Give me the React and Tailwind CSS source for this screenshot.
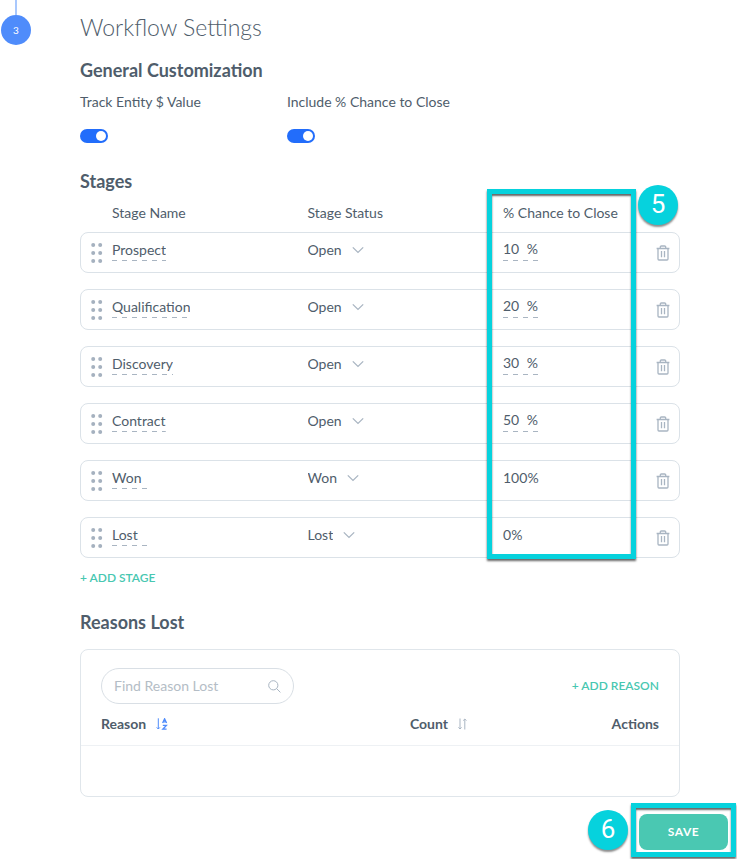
import { useState } from 'react'

const STAGES = [
  { id: 1, name: 'Prospect', status: 'Open', chance: 10 },
  { id: 2, name: 'Qualification', status: 'Open', chance: 20 },
  { id: 3, name: 'Discovery', status: 'Open', chance: 30 },
  { id: 4, name: 'Contract', status: 'Open', chance: 50 },
  { id: 5, name: 'Won', status: 'Won', chance: 100, locked: true },
  { id: 6, name: 'Lost', status: 'Lost', chance: 0, locked: true },
]

const STATUSES = ['Open', 'Won', 'Lost']

const DASHES = 'bg-[repeating-linear-gradient(to_right,#a9b5c2_0_5px,transparent_5px_10px)] bg-[length:100%_1px] bg-bottom bg-no-repeat'
const STAGE_GRID = 'grid grid-cols-[21px_1fr_1fr_153px_14px] pl-[10px] pr-[9px] border'

function Toggle({ id, label }) {
  const [on, setOn] = useState(true)
  return (
    <div className="flex flex-col items-start gap-[17px]">
      <label htmlFor={id} className="leading-5">{label}</label>
      <input id={id} type="checkbox" role="switch" checked={on} onChange={e => setOn(e.target.checked)}
        className="flex h-[14px] w-7 appearance-none items-center rounded-full bg-gray-300 px-[2px] before:size-[10px] before:rounded-full before:bg-white checked:justify-end checked:bg-[#226dfb]" />
    </div>
  )
}

function GripIcon() {
  return (
    <svg width="12" height="20" viewBox="0 0 12 20" fill="#a5b1bf">
      {[2, 10, 18].map(y => (
        <g key={y}>
          <circle cx="2.2" cy={y} r="2" />
          <circle cx="9.2" cy={y} r="2" />
        </g>
      ))}
    </svg>
  )
}

function TrashIcon() {
  return (
    <svg width="14" height="16" viewBox="0 0 14 16" fill="none" stroke="#a9b5c2" strokeWidth="1.3">
      <path d="M0.6 3.5H13.4M2 3.5V14a1 1 0 0 0 1 1H11a1 1 0 0 0 1-1V3.5M4.3 3.3V2.1a1.1 1.1 0 0 1 1.1-1.1H8.6A1.1 1.1 0 0 1 9.7 2.1V3.3M5.5 6V12.3M8.5 6V12.3" />
    </svg>
  )
}

function ChevronIcon() {
  return (
    <svg width="12" height="8" viewBox="0 0 12 8" fill="none" stroke="#a9b5c2" strokeWidth="1.3" className="pointer-events-none">
      <path d="M0.8 1.4L6 6.4L11.2 1.4" />
    </svg>
  )
}

function StageRow({ stage, onChange, onRemove }) {
  return (
    <li className={`${STAGE_GRID} h-[41px] items-center rounded-lg border-[#dbe2e8] bg-white`}>
      <button aria-label={`Move ${stage.name}`} className="cursor-grab"><GripIcon /></button>
      <div className="flex pb-[5px]">
        <input aria-label="Stage name" value={stage.name} onChange={e => onChange({ name: e.target.value })}
          className={`field-sizing-content h-[22px] min-w-[35px] pb-[2px] outline-none ${DASHES}`} />
      </div>
      <div className="flex items-center gap-[10px] pb-[5px]">
        <select aria-label={`${stage.name} status`} value={stage.status} onChange={e => onChange({ status: e.target.value })}
          className="field-sizing-content appearance-none bg-transparent outline-none">
          {STATUSES.map(s => <option key={s}>{s}</option>)}
        </select>
        <ChevronIcon />
      </div>
      {stage.locked ? (
        <span className="pb-[5px]">{stage.chance}%</span>
      ) : (
        <div className="flex pb-[5px]">
          <label className={`flex h-[22px] w-[35px] items-center justify-between pb-[2px] ${DASHES}`}>
            <input aria-label={`${stage.name} chance to close`} value={stage.chance} onChange={e => onChange({ chance: e.target.value })}
              className="w-5 bg-transparent outline-none" />
            <span>%</span>
          </label>
        </div>
      )}
      <button aria-label={`Delete ${stage.name}`} onClick={onRemove}><TrashIcon /></button>
    </li>
  )
}

function Badge({ children, className }) {
  return (
    <span className={`flex size-10 items-center justify-center rounded-full bg-[#06d2dd] font-[Roboto] text-[26px] text-white shadow-[0_2px_2px_rgba(0,0,0,0.45)] ${className ?? ''}`}>
      {children}
    </span>
  )
}

export default function App() {
  const [stages, setStages] = useState(STAGES)

  const update = (id, patch) => setStages(list => list.map(s => (s.id === id ? { ...s, ...patch } : s)))
  const remove = id => setStages(list => list.filter(s => s.id !== id))
  const add = () => setStages(list => [...list, { id: Date.now(), name: 'New', status: 'Open', chance: 0 }])

  return (
    <div className="bg-white font-[Lato,sans-serif] text-sm text-[#4f5d6b]">
      <div className="flex">
        {/* Step marker */}
        <div className="flex w-8 flex-col items-center">
          <div className="h-[15px] w-[2px] bg-[#a9c8fd]" />
          <div className="flex size-[30px] items-center justify-center rounded-full bg-[#4f8cfb] text-[10px] text-white">3</div>
        </div>

        <main className="ml-12 mr-[57px] flex-1">
          <h1 className="pt-[11px] text-[23px] leading-8 font-light">Workflow Settings</h1>

          <h2 className="mt-[15px] text-lg leading-6 font-bold">General Customization</h2>
          <div className="mt-[10px] flex gap-[86px]">
            <Toggle id="track-value" label="Track Entity $ Value" />
            <Toggle id="include-chance" label="Include % Chance to Close" />
          </div>

          <h2 className="mt-[26px] text-lg leading-6 font-bold">Stages</h2>
          <div className="relative">
            <div className={`${STAGE_GRID} border-transparent pt-[9px] pb-2 leading-5`}>
              <span className="col-start-2">Stage Name</span>
              <span>Stage Status</span>
              <span>% Chance to Close</span>
            </div>
            <ul className="flex flex-col gap-4">
              {stages.map(s => (
                <StageRow key={s.id} stage={s} onChange={patch => update(s.id, patch)} onRemove={() => remove(s.id)} />
              ))}
            </ul>
            {/* Callout 5 */}
            <div className="pointer-events-none absolute -top-1 -bottom-px right-11 w-[149px] border-5 border-[#06d2dd] shadow-[0_2px_2px_rgba(0,0,0,0.6),inset_0_2px_2px_rgba(0,0,0,0.6)]" />
            <Badge className="absolute -top-2 right-[2px]">5</Badge>
          </div>
          <button onClick={add} className="mt-3 block text-xs leading-4 font-semibold text-[#48c7b1]">+ ADD STAGE</button>

          <h2 className="mt-6 text-lg leading-6 font-bold">Reasons Lost</h2>
          <section className="mt-[15px] rounded-lg border border-[#e0e6eb]">
            <div className="flex items-center justify-between px-5 pt-[18px]">
              <div className="flex h-9 w-[193px] items-center rounded-full border border-[#d9dfe5] px-3">
                <input aria-label="Find Reason Lost" placeholder="Find Reason Lost" className="min-w-0 flex-1 outline-none placeholder:text-[#b4bdc6]" />
                <svg width="13" height="13" viewBox="0 0 13 13" fill="none" stroke="#a9b5c2">
                  <circle cx="5.3" cy="5.3" r="4.6" />
                  <path d="M8.6 8.6L12.4 12.4" />
                </svg>
              </div>
              <button className="text-xs font-semibold text-[#48c7b1]">+ ADD REASON</button>
            </div>
            <table className="w-full">
              <thead>
                <tr className="h-[41px] border-b border-[#eef1f4] text-left">
                  <th className="w-[55%] pl-5 font-bold">
                    <button className="flex items-center gap-[10px]">
                      Reason
                      <svg width="12" height="12" viewBox="0 0 12 12" fill="none" stroke="#4f8cfb">
                        <path d="M2.3 0.3V11M0.7 9.4L2.3 11L3.9 9.4" />
                        <path d="M6.6 5L8.6 0.8L10.6 5M7.2 3.8H10M6.8 7.4H10.4L6.8 11.2H10.6" strokeWidth="1.3" />
                      </svg>
                    </button>
                  </th>
                  <th className="font-bold">
                    <button className="flex items-center gap-[10px]">
                      Count
                      <svg width="9" height="12" viewBox="0 0 9 12" fill="none" stroke="#a9b5c2">
                        <path d="M2 0.5V11M0.4 9.4L2 11L3.6 9.4M6.8 11.5V1M5.2 2.6L6.8 1L8.4 2.6" />
                      </svg>
                    </button>
                  </th>
                  <th className="pr-5 text-right font-bold">Actions</th>
                </tr>
              </thead>
              <tbody>
                <tr className="h-[51px]"><td colSpan={3} /></tr>
              </tbody>
            </table>
          </section>
        </main>
      </div>

      {/* Footer with callout 6 */}
      <footer className="mt-[6px] flex items-center justify-end gap-[3px] pr-px pb-[2px]">
        <Badge>6</Badge>
        <div className="border-5 border-[#06d2dd] px-[3px] pt-[6px] pb-[2px] shadow-[0_2px_2px_rgba(0,0,0,0.6),inset_0_2px_2px_rgba(0,0,0,0.6)]">
          <button className="h-9 w-[89px] rounded-lg bg-[#4ac8b2] text-xs font-bold tracking-wider text-white">SAVE</button>
        </div>
      </footer>
    </div>
  )
}
